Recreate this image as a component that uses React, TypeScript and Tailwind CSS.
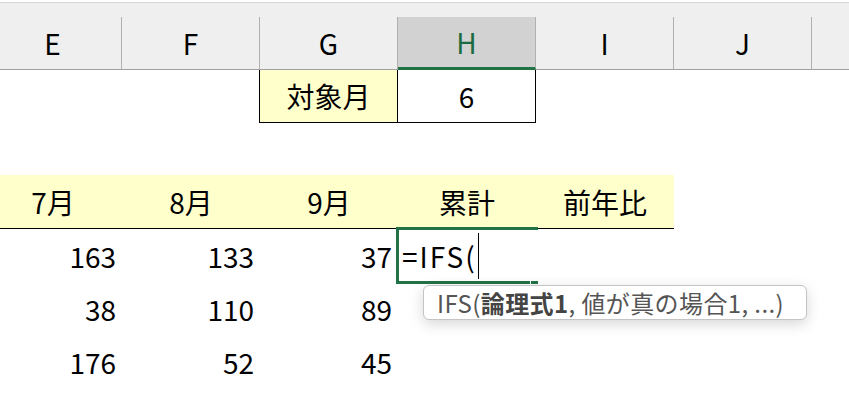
import clsx from 'clsx';

const COLS = ['E', 'F', 'G', 'H', 'I', 'J', ''];

const DATA = [
  ['163', '133', '37'],
  ['38', '110', '89'],
  ['176', '52', '45'],
];

const HEAD = ['7月', '8月', '9月', '累計', '前年比'];

function HeaderRow() {
  return (
    <div className="flex ml-[-16px] h-[53px] shrink-0">
      {COLS.map((c, i) => (
        <div
          key={i}
          className={clsx(
            'w-[138px] shrink-0 flex items-center justify-center border-r border-r-[#b0b0b0]',
            c === 'H'
              ? 'bg-[#d2d2d2] border-b-[3px] border-b-[#217346] text-[#1d6b40]'
              : 'bg-[#efefef] border-b border-b-[#9f9f9f] text-black'
          )}
        >
          {c}
        </div>
      ))}
    </div>
  );
}

function EditCell() {
  return (
    <div className="relative w-[138px] shrink-0 flex items-center pl-[4px]">
      <span className="tracking-[2px]">=IFS(</span>
      <span className="ml-[1px] w-px h-[46px] bg-black" />
      {/* active cell border */}
      <div className="absolute top-[-2px] left-[-2px] w-[142px] h-[3px] bg-[#217346]" />
      <div className="absolute top-[-2px] left-[-2px] w-[3px] h-[57px] bg-[#217346]" />
      <div className="absolute top-[52px] left-[-2px] w-[134px] h-[3px] bg-[#217346]" />
      <div className="absolute top-[52px] left-[133px] w-[7px] h-[3px] bg-[#217346]" />
    </div>
  );
}

export default function App() {
  return (
    <div className="relative w-[849px] h-[412px] overflow-hidden bg-white flex flex-col font-['Noto_Sans_CJK_JP',sans-serif] text-[28px] leading-none text-black">
      {/* strip above column headers */}
      <div className="h-[2px] shrink-0 bg-white" />
      <div className="h-px shrink-0 bg-[#d6d6d6]" />
      <div className="h-[14px] shrink-0 bg-[#efefef]" />

      <HeaderRow />

      {/* row: 対象月 */}
      <div className="flex ml-[-16px] h-[53px] shrink-0">
        <div className="w-[138px] shrink-0" />
        <div className="w-[138px] shrink-0 border-r border-black" />
        <div className="w-[138px] shrink-0 flex items-center justify-center bg-[#ffffcc] border-r border-b border-black">
          対象月
        </div>
        <div className="w-[138px] shrink-0 flex items-center justify-center bg-white border-r border-b border-black">
          6
        </div>
      </div>

      <div className="h-[52px] shrink-0" />

      {/* month header row */}
      <div className="flex ml-[-16px] h-[54px] shrink-0">
        {HEAD.map(h => (
          <div
            key={h}
            className="w-[138px] shrink-0 flex items-center justify-center bg-[#ffffcc] border-b border-black"
          >
            {h}
          </div>
        ))}
      </div>

      {DATA.map((row, i) => (
        <div key={i} className="flex ml-[-16px] h-[53px] shrink-0">
          {row.map((v, j) => (
            <div key={j} className="w-[138px] shrink-0 flex items-center justify-end pr-[6px]">
              {v}
            </div>
          ))}
          {i === 0 && <EditCell />}
        </div>
      ))}

      {/* function tooltip */}
      <div className="absolute left-[423px] top-[285px] w-[384px] h-[35px] rounded-[6px] border border-[#c4c4c4] bg-white shadow-[0_4px_14px_rgba(0,0,0,0.16)] flex items-center pl-[13px] text-[24px] tracking-[0.4px] text-[#555555] whitespace-nowrap">
        IFS(<b className="font-bold text-[#444444]">論理式1</b>, 値が真の場合1, ...)
      </div>
    </div>
  );
}
